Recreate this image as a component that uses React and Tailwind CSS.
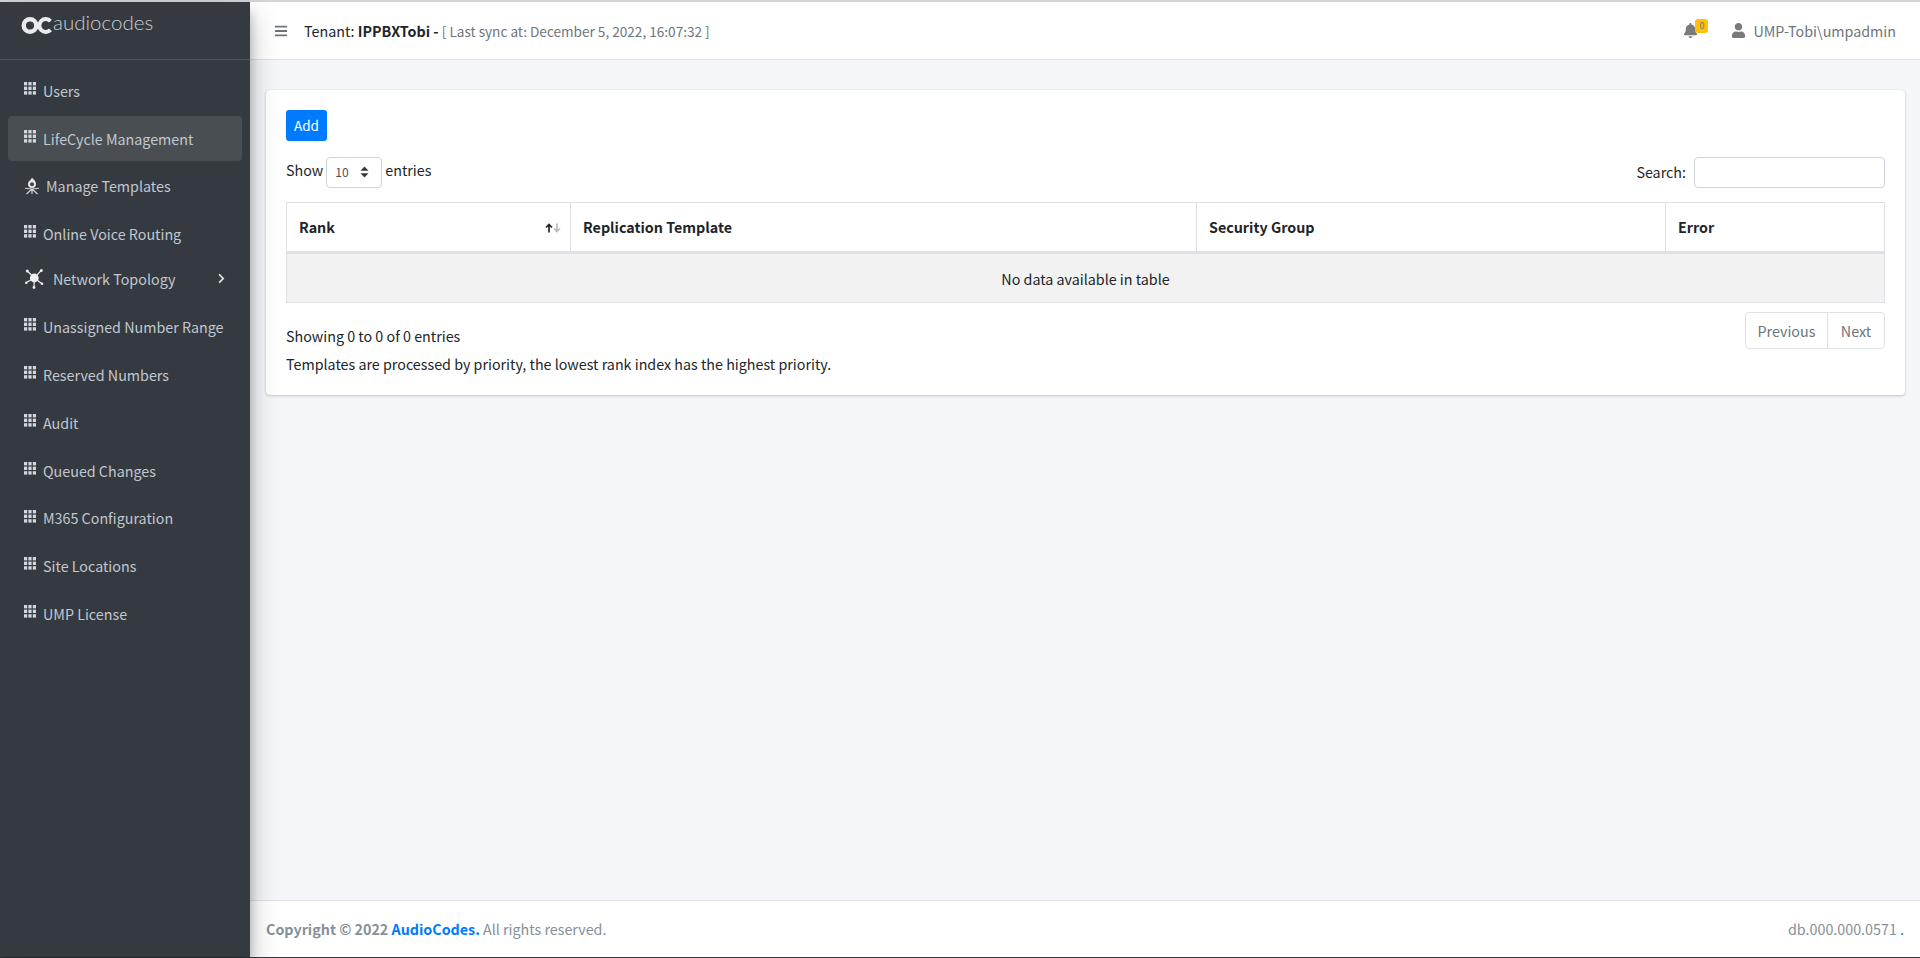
import React from 'react'
import { FaBars, FaBell, FaUser, FaChevronRight } from 'react-icons/fa'

const GridIcon = () => (
  <svg width="12" height="13" viewBox="0 0 12 13" fill="#d3d7dd" className="shrink-0 -mt-[4px] mr-[7px]">
    {[0, 4.6, 9.2].map((y) =>
      [0, 4.4, 8.8].map((x) => <rect key={`${x}-${y}`} x={x} y={y} width="3.2" height="3.4" />)
    )}
  </svg>
)

// little campfire drawn in the reference
const TemplatesIcon = () => (
  <svg width="16" height="18" viewBox="0 0 16 18" fill="none" className="shrink-0 mr-[6px] -mt-[1px]">
    <path d="M8 .5C8.6 2 12 3.4 12 7a4 4 0 0 1-8 0c0-2 1.2-3 2-3.6C6.6 2.800 7.600 1.800 8 .5z" fill="#e6e9ec" />
    <circle cx="8" cy="7.200" r="2" fill="#4a3f4a" />
    <path d="M8 12 1 11.200M8 12l7-.8M8 12l-5.500 5M8 12l5.500 5M8 12v5" stroke="#d3d7dd" strokeWidth="1.100" />
  </svg>
)

const TopologyIcon = () => (
  <svg width="20" height="20" viewBox="0 0 20 20" fill="#eceef0" stroke="#eceef0" className="shrink-0 ml-[1px] mr-[8px]">
    <path d="M9.300 9 2.300 2M9.300 9l7-7.700M9.300 9 1 13.700M9.300 9 17 14.700M9.300 9 9 18.700" strokeWidth="1.200" />
    <circle cx="9.300" cy="9" r="4.400" stroke="none" />
    <circle cx="2.300" cy="2" r="1.500" stroke="none" />
    <circle cx="16.300" cy="1.500" r="1.500" stroke="none" />
    <circle cx="1.300" cy="13.700" r="1.300" stroke="none" />
    <circle cx="17" cy="14.700" r="1.300" stroke="none" />
    <circle cx="9" cy="18.500" r="1.400" stroke="none" />
  </svg>
)

const navItems = [
  { label: 'Users', icon: GridIcon },
  { label: 'LifeCycle Management', icon: GridIcon, active: true },
  { label: 'Manage Templates', icon: TemplatesIcon },
  { label: 'Online Voice Routing', icon: GridIcon },
  { label: 'Network Topology', icon: TopologyIcon, arrow: true },
  { label: 'Unassigned Number Range', icon: GridIcon },
  { label: 'Reserved Numbers', icon: GridIcon },
  { label: 'Audit', icon: GridIcon },
  { label: 'Queued Changes', icon: GridIcon },
  { label: 'M365 Configuration', icon: GridIcon },
  { label: 'Site Locations', icon: GridIcon },
  { label: 'UMP License', icon: GridIcon },
]

function Sidebar() {
  return (
    <aside className="relative z-10 w-[250px] shrink-0 bg-[#343a40] shadow-[0_14px_28px_rgba(0,0,0,0.25),0_10px_10px_rgba(0,0,0,0.22)]">
      <div className="h-[58px] border-b border-[#4b545c] pl-[21px] pt-[3px] flex items-start">
        <svg width="31" height="17" viewBox="0 0 31 17" fill="none" stroke="#e9ecef" className="mt-[12px] shrink-0">
          <circle cx="9" cy="8.500" r="6.300" strokeWidth="4.400" />
          <path d="M29.500 4.200A6.400 6.400 0 1 0 29.500 12.800" strokeWidth="4" />
        </svg>
        <span className="ml-[1px] mt-[2px] text-[20.5px] leading-[30px] font-light font-['Lato',sans-serif] text-[#c9cdd2]">audiocodes</span>
      </div>
      <nav className="pt-[8px] px-2">
        {navItems.map((item) => {
          const Icon = item.icon
          return (
            <a
              key={item.label}
              className={`h-[45px] mb-[2.8px] pl-4 pr-4 flex items-center rounded whitespace-nowrap text-[#c2c7d0] ${
                item.active ? 'bg-[#494e53]' : ''
              } ${item.arrow ? '-mt-[2.6px]' : ''}`}
            >
              <Icon />
              <span>{item.label}</span>
              {item.arrow && <FaChevronRight className="ml-auto -mr-[1px] -mt-[2px] text-[#dfe2e6]" size={11} />}
            </a>
          )
        })}
      </nav>
    </aside>
  )
}

function Topbar() {
  return (
    <header className="h-[58px] shrink-0 bg-white border-b border-[#dee2e6] flex items-center pl-[24px] pr-[24px]">
      <FaBars className="text-[#6c757d] mr-[16px]" size={14} />
      <span className="text-[#212529]">
        Tenant: <b className="font-bold">IPPBXTobi -</b>{' '}
        <span className="text-[#6c757d] text-[13.6px]">[ Last sync at: December 5, 2022, 16:07:32 ]</span>
      </span>
      <div className="ml-auto flex items-center text-[#6c757d]">
        <div className="relative mr-[33px]">
          <FaBell className="text-[#7a7a7a]" size={15} />
          <span className="absolute -top-[4px] left-[12px] w-[13px] h-[14px] rounded-[3px] bg-[#ffc107] text-[#6c757d] text-[9px] leading-[13px] text-center">0</span>
        </div>
        <FaUser className="text-[#7a7a7a] mr-[7px]" size={15} />
        <span>UMP-Tobi\umpadmin</span>
      </div>
    </header>
  )
}

const SortArrows = () => (
  <svg width="16" height="10" viewBox="0 0 16 10" fill="none" className="absolute right-[9px] top-[20px]" strokeWidth="1.7">
    <path d="M4 9.500V1.500M1 4.500 4 1.500l3 3" stroke="#212529" />
    <path d="M12 .5v8M9 5.500l3 3 3-3" stroke="#b9bcbf" />
  </svg>
)

function TemplatesCard() {
  return (
    <div className="bg-white rounded shadow-[0_0_1px_rgba(0,0,0,0.125),0_1px_3px_rgba(0,0,0,0.2)] px-5 pt-5 h-[305px]">
      <button className="block h-[31px] w-[41px] rounded-[3px] bg-[#007bff] text-white text-[13.5px]">Add</button>
      <div className="flex justify-between items-start mt-[16px] h-[30px]">
        <label className="flex items-center text-[#212529] h-[26px]">
          Show
          <span className="ml-[3px] mr-[3px] w-[56px] h-[31px] mt-[4px] border border-[#ced4da] rounded flex items-center justify-between pl-[8px] pr-[12px] text-[12px] text-[#495057]">
            10
            <svg width="9" height="12" viewBox="0 0 9 12" fill="#343a40">
              <path d="M4.500 0.500 8.500 4.800H.5zM4.500 11.500 .5 7.200h8z" />
            </svg>
          </span>
          entries
        </label>
        <label className="flex items-center text-[#212529] -mt-[1px]">
          Search:
          <span className="ml-2 mt-[1px] block w-[191px] h-[31px] border border-[#ced4da] rounded bg-white" />
        </label>
      </div>
      <table className="w-full table-fixed border-collapse mt-[15px] text-[#212529]">
        <colgroup>
          <col className="w-[284px]" />
          <col className="w-[626px]" />
          <col className="w-[469px]" />
          <col />
        </colgroup>
        <thead>
          <tr className="h-[50px]">
            <th className="relative border border-[#dee2e6] border-b-[3px] text-left font-bold px-3">
              Rank
              <SortArrows />
            </th>
            <th className="border border-[#dee2e6] border-b-[3px] text-left font-bold px-3">Replication Template</th>
            <th className="border border-[#dee2e6] border-b-[3px] text-left font-bold px-3">Security Group</th>
            <th className="border border-[#dee2e6] border-b-[3px] text-left font-bold px-3">Error</th>
          </tr>
        </thead>
        <tbody>
          <tr className="h-[50px] bg-[#f2f2f2]">
            <td colSpan={4} className="border border-[#dee2e6] text-center pt-[1px]">No data available in table</td>
          </tr>
        </tbody>
      </table>
      <div className="flex justify-between items-start mt-[9px]">
        <div className="pt-[12px] leading-[24px] text-[#212529]">Showing 0 to 0 of 0 entries</div>
        <div className="flex h-[37px] border border-[#dee2e6] rounded text-[#6c757d] bg-white">
          <span className="w-[82px] flex items-center justify-center border-r border-[#dee2e6]">Previous</span>
          <span className="w-[56px] flex items-center justify-center">Next</span>
        </div>
      </div>
      <p className="mt-[3px] leading-[24px] text-[#212529]">
        Templates are processed by priority, the lowest rank index has the highest priority.
      </p>
    </div>
  )
}

function Footer() {
  return (
    <footer className="h-[57px] shrink-0 bg-white border-t border-[#dee2e6] flex items-center justify-between pl-[16px] pr-[16px] text-[#869099]">
      <span>
        <b className="font-bold">Copyright © 2022 <span className="text-[#007bff]">AudioCodes.</span></b> All rights reserved.
      </span>
      <span>
        db.000.000.0571 <span className="text-[#007bff]">.</span>
      </span>
    </footer>
  )
}

export default function App() {
  return (
    <div className="h-[958px] flex flex-col overflow-hidden bg-white text-[14.3px] font-['Noto_Sans_CJK_SC','Noto_Sans',sans-serif]">
      <div className="h-[2px] shrink-0 bg-[#d4d4d4]" />
      <div className="flex flex-1 min-h-0">
        <Sidebar />
        <div className="flex-1 flex flex-col min-w-0 bg-[#f4f6f9]">
          <Topbar />
          <main className="flex-1 pl-4 pr-[15px] pt-[30px]">
            <TemplatesCard />
          </main>
          <Footer />
        </div>
      </div>
      <div className="h-[1px] shrink-0 bg-[#343a40]" />
    </div>
  )
}
